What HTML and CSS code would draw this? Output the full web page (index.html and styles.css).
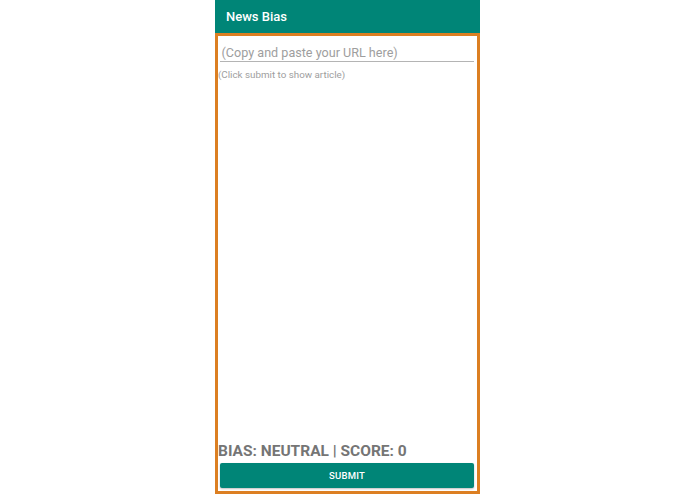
FILE: index.html
```html
<!DOCTYPE html>
<html>
<head>
<meta charset="utf-8">
<link rel="stylesheet" href="styles.css">
</head>
<body>
<div class="phone">
  <header class="appbar">News Bias</header>
  <main class="frame">
    <div class="url">(Copy and paste your URL here)</div>
    <div class="article">(Click submit to show article)</div>
    <div class="spacer"></div>
    <div class="bias">BIAS: NEUTRAL | SCORE: 0</div>
    <button class="submit">SUBMIT</button>
  </main>
</div>
</body>
</html>
```
FILE: styles.css
```css
html, body {
  margin: 0;
  padding: 0;
  background: #ffffff;
  height: 100%;
}
body {
  font-family: Roboto, "Liberation Sans", sans-serif;
}
.phone {
  width: 265px;
  height: 494px;
  margin: 0 auto;
  display: flex;
  flex-direction: column;
}
.appbar {
  height: 33px;
  line-height: 33px;
  background: #008577;
  color: #ffffff;
  font-size: 13px;
  font-weight: 500;
  padding-left: 11px;
  flex: none;
}
.frame {
  flex: 1;
  border: 3px solid #dc7f22;
  display: flex;
  flex-direction: column;
  min-height: 0;
}
.url {
  margin: 0 3px 0 2px;
  padding: 9px 2px 1px 1.5px;
  line-height: 15px;
  font-size: 12.6px;
  color: #9e9e9e;
  border-bottom: 1px solid #b4b4b4;
}
.article {
  margin-top: 6.5px;
  font-size: 9.8px;
  color: #9e9e9e;
}
.spacer {
  flex: 1;
}
.bias {
  font-size: 15.5px;
  font-weight: 700;
  color: #757575;
  line-height: 18px;
}
.submit {
  margin: 3px 3px 3px 2px;
  height: 25px;
  border: none;
  border-radius: 2px;
  background: #008577;
  color: #ffffff;
  font-family: Roboto, "Liberation Sans", sans-serif;
  font-size: 9.5px;
  font-weight: 500;
  letter-spacing: 0.2px;
  padding: 0;
  box-shadow: 0 1px 2px rgba(0, 0, 0, 0.25);
}
```
